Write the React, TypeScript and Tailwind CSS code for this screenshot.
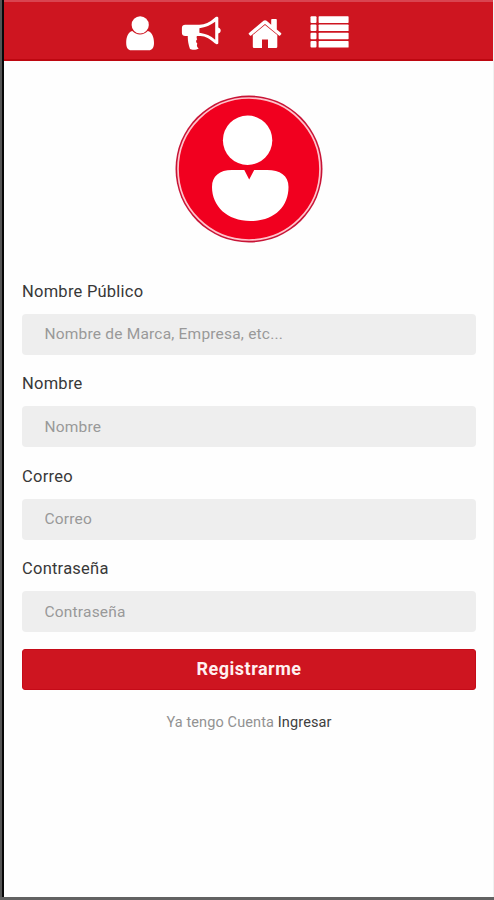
import React from "react";

const fields = [
  { label: "Nombre Público", placeholder: "Nombre de Marca, Empresa, etc...", type: "text" },
  { label: "Nombre", placeholder: "Nombre", type: "text" },
  { label: "Correo", placeholder: "Correo", type: "email" },
  { label: "Contraseña", placeholder: "Contraseña", type: "password" },
];

function UserIcon() {
  return (
    <svg width="30" height="36" viewBox="0 0 30 36" fill="#fff" aria-hidden="true">
      <path d="M7.3 16C3 17.2 1.2 22 1.2 28C1.2 33 3.3 35.3 6 35.3H24C26.8 35.3 29 33 29 28C29 22 27 17.2 22.8 16C20.5 18.3 18 19.4 15 19.4C12 19.4 9.6 18.3 7.3 16Z" />
      <circle cx="15.2" cy="9.9" r="8.6" />
    </svg>
  );
}

function MegaphoneIcon() {
  return (
    <svg width="40" height="35" viewBox="0 0 40 35" fill="#fff" aria-hidden="true">
      <path
        fillRule="evenodd"
        d="M36.8 2C35.7 1.6 34.4 2.2 33.5 3C28.5 7.5 24 9.7 18.5 9.7H4.2C2.3 9.7 .9 11 .9 12.7V18C.9 19.8 2.3 21 4.2 21H6.8C6.6 25.3 7.4 29.5 9 34C11 35.1 15.5 35 17.7 33.5C16 32 15.4 30.5 16.4 28.7C14.8 27.2 14.6 25.5 16.2 24.3C15.5 23.2 15.5 22.2 15.9 21H18.5C24 20.6 28.5 23.6 33.5 28C34.5 28.8 35.8 29.6 36.8 29.1C37.5 28.7 37.3 27.4 37.3 26.1V18.5C38.8 18 39.7 17 39.7 15.5C39.7 14 38.8 13 37.3 12.5V5C37.3 3.8 37.6 2.4 36.8 2ZM34.2 6.8V24.7C29.5 20.9 25 18.6 18.4 17.8V13.2C25 12.5 29.5 10.2 34.2 6.8Z"
      />
    </svg>
  );
}

function HomeIcon() {
  return (
    <svg width="34" height="31" viewBox="0 0 34 31" fill="#fff" aria-hidden="true">
      <path d="M17 7L4.8 17.1V28.4C4.8 29.4 5.5 30.1 6.5 30.1H14V21.6H20V30.1H27.6C28.6 30.1 29.3 29.4 29.3 28.4V17.1L17 7Z" />
      <path d="M33 14.9L28.8 11.4V1.7C28.8 1.2 28.5.9 28 .9H24C23.5.9 23.2 1.2 23.2 1.7V6.7L18.6 2.8C17.6 2 16.5 2 15.5 2.8L1 14.9C.6 15.3.5 15.8.9 16.2L2 17.5C2.3 17.9 2.8 17.9 3.2 17.6L17 6L30.9 17.6C31.3 17.9 31.8 17.9 32.1 17.5L33.2 16.2C33.5 15.8 33.4 15.3 33 14.9Z" />
    </svg>
  );
}

function ListIcon() {
  return (
    <svg width="40" height="32" viewBox="0 0 40 32" fill="#fff" aria-hidden="true">
      {[0, 8.2, 16.4, 24.7].map((y) => (
        <g key={y}>
          <rect x=".5" y={y + 0.3} width="6" height="6.6" rx="1" />
          <rect x="8.6" y={y + 0.3} width="30" height="6.6" rx=".7" />
        </g>
      ))}
    </svg>
  );
}

function Avatar() {
  return (
    <svg width="148" height="148" viewBox="0 0 148 148" aria-hidden="true">
      <circle cx="74" cy="74" r="73.5" fill="#c81436" />
      <circle cx="74" cy="74" r="71" fill="#f1001f" stroke="#ffc4cc" strokeWidth="1.7" />
      <circle cx="72.6" cy="45.3" r="24.7" fill="#fff" />
      <path
        d="M57 75H69.3L74.2 84.5L79.2 75H92C105 75 113.5 80.5 113.5 92C113.5 112 99 126 75.5 126C52 126 37 111 37 92C37 81 44.5 75 57 75Z"
        fill="#fff"
      />
    </svg>
  );
}

export default function App() {
  return (
    <div className="flex h-[900px] w-[494px] flex-col overflow-hidden border-b-[3px] border-[#626262] bg-[#fefefe] font-[Roboto,sans-serif]">
      <div className="flex min-h-0 flex-1 border-l-2 border-[#555]">
        <div className="w-[2px] shrink-0 bg-[#080808]" />
        <div className="flex min-w-0 flex-1 flex-col border-r border-[#f1f1f1]">
          <header className="flex h-[61px] shrink-0 items-start border-t-2 border-b-2 border-t-[#d94450] border-b-[#bd0710] bg-[#ce1520] pl-[121px]">
            <button className="mt-[13px]"><UserIcon /></button>
            <button className="mt-[13px] ml-[26px]"><MegaphoneIcon /></button>
            <button className="mt-[16px] ml-[27px]"><HomeIcon /></button>
            <button className="mt-[14px] ml-[28px]"><ListIcon /></button>
          </header>
          <main className="flex flex-col pr-[17px] pl-[18px]">
            <div className="mt-[34px] flex justify-center pr-px">
              <Avatar />
            </div>
            <form className="mt-[37.5px] flex flex-col">
              {fields.map((f) => (
                <label key={f.label} className="flex h-[92.6px] flex-col">
                  <span className="h-[33px] text-[16.5px] leading-[22px] tracking-[0.24px] text-[#383838]">
                    {f.label}
                  </span>
                  <input
                    type={f.type}
                    placeholder={f.placeholder}
                    className="h-[41px] w-full rounded-[4px] bg-[#eeeeee] pr-[22px] pl-[22.5px] text-[15.5px] tracking-[0.2px] text-[#303030] placeholder:text-[#999] placeholder:opacity-100"
                  />
                </label>
              ))}
              <button
                type="button"
                className="-mt-[2px] h-[41px] rounded-[3px] border border-[#c50b18] bg-[#ce1520] pb-[2px] text-[18px] font-bold tracking-[0.5px] text-[#fff0f0]"
              >
                Registrarme
              </button>
            </form>
            <p className="mt-[22px] text-center text-[14.5px] leading-[22px] tracking-[0.12px] text-[#929292]">
              Ya tengo Cuenta <a className="text-[#404040]">Ingresar</a>
            </p>
          </main>
        </div>
      </div>
    </div>
  );
}
